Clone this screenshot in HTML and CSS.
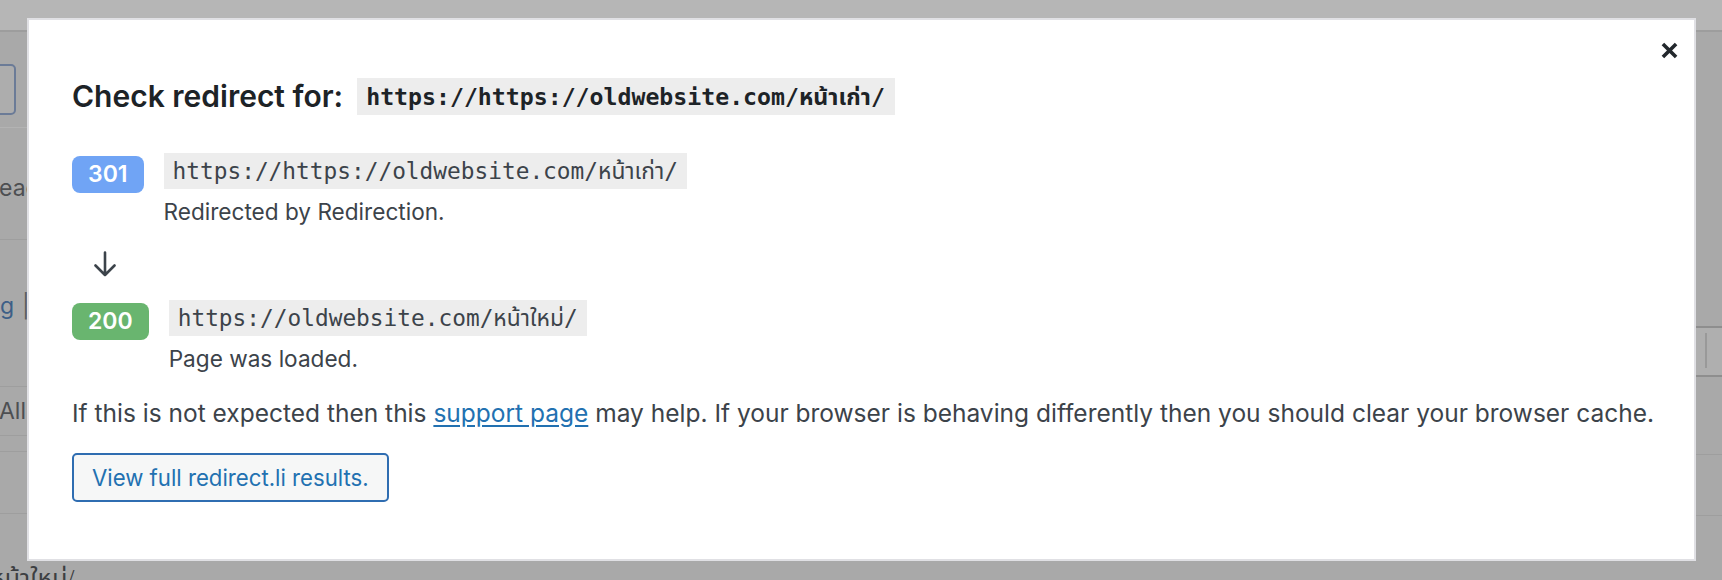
FILE: index.html
```html
<!DOCTYPE html>
<html lang="en">
<head>
<meta charset="utf-8">
<title>Check redirect</title>
<link rel="stylesheet" href="styles.css">
</head>
<body>
<div class="page">
  <div class="topbar"></div>
  <div class="columns">
    <div class="strip strip-left">
      <div class="seg seg-l1"><span class="bg-button"></span></div>
      <div class="seg seg-l2"><span class="bg-text">eac</span></div>
      <div class="seg seg-l3"><span class="bg-link">g</span><span class="bg-sep">|</span></div>
      <div class="seg seg-l4"><span class="bg-text">All</span></div>
      <div class="seg seg-l5"></div>
      <div class="seg seg-l6"></div>
      <div class="seg seg-l7"><span class="bg-thai">หน้าใหม่/</span></div>
    </div>
    <div class="strip strip-right">
      <div class="seg seg-r1"></div>
      <div class="seg seg-r2"><span class="bg-bar"></span></div>
      <div class="seg seg-r3"></div>
      <div class="seg seg-r4"></div>
    </div>
  </div>
</div>

<div class="modal">
  <button class="close" aria-label="Close">
    <svg width="17" height="17" viewBox="0 0 16 16"><path d="M3 0.6 L8 5.6 L13 0.6 L15.4 3 L10.4 8 L15.4 13 L13 15.4 L8 10.4 L3 15.4 L0.6 13 L5.6 8 L0.6 3 Z" fill="#23282d"/></svg>
  </button>
  <div class="title-row">
    <h2 class="title">Check redirect for:</h2>
    <code class="code code-bold">https://https://oldwebsite.com/หน้าเก่า/</code>
  </div>

  <div class="step">
    <span class="badge badge-blue">301</span>
    <div class="step-body">
      <code class="code">https://https://oldwebsite.com/หน้าเก่า/</code>
      <p class="step-desc">Redirected by Redirection.</p>
    </div>
  </div>

  <div class="arrow">
    <svg width="24" height="26" viewBox="0 0 24 26"><path d="M12 1.5 V24 M2.5 14.5 L12 24 L21.5 14.5" fill="none" stroke="#3c434a" stroke-width="2.6" stroke-linecap="round" stroke-linejoin="round"/></svg>
  </div>

  <div class="step step-second">
    <span class="badge badge-green">200</span>
    <div class="step-body">
      <code class="code">https://oldwebsite.com/หน้าใหม่/</code>
      <p class="step-desc">Page was loaded.</p>
    </div>
  </div>

  <p class="note">If this is not expected then this <a href="#" class="link">support page</a> may help. If your browser is behaving differently then you should clear your browser cache.</p>

  <button class="btn">View full redirect.li results.</button>
</div>
</body>
</html>
```

FILE: styles.css
```css
html, body {
  margin: 0;
  padding: 0;
}
body {
  width: 1722px;
  height: 580px;
  overflow: hidden;
  background: #a9a9a9;
  font-family: "Inter", "Noto Sans", "Noto Sans Thai", "Loma", "Garuda", sans-serif;
  position: relative;
}

/* underlying (dimmed) page */
.page {
  height: 580px;
  display: flex;
  flex-direction: column;
}
.topbar {
  height: 30px;
  background: #b6b6b6;
  border-bottom: 2px solid #9d9d9d;
  flex: none;
}
.columns {
  flex: 1;
  display: flex;
  justify-content: space-between;
}
.strip {
  display: flex;
  flex-direction: column;
}
.strip-left { width: 27px; }
.strip-right { width: 26px; }
.seg { flex: none; white-space: nowrap; }

.seg-l1 { height: 95px; border-bottom: 1px solid #b3b3b3; }
.bg-button {
  display: block;
  margin: 32px 0 0 -12px;
  width: 24px;
  height: 47px;
  border: 2px solid #6b7b97;
  border-radius: 5px;
  background: #adadad;
}
.seg-l2 { border-bottom: 1px solid #9e9e9e; display: flex; align-items: center; padding-top: 8px; box-sizing: border-box; height: 112px; }
.seg-l3 { border-bottom: 1px solid #9e9e9e; display: flex; align-items: center; padding-bottom: 14px; box-sizing: border-box; height: 147px; }
.seg-l4 { height: 48px; border-bottom: 1px solid #9e9e9e; display: flex; align-items: center; }
.seg-l5 { height: 15px; border-bottom: 1px solid #9e9e9e; }
.seg-l6 { height: 61px; border-bottom: 1px solid #9e9e9e; }
.seg-l7 { flex: 1; display: flex; align-items: flex-end; }

.bg-text {
  font-size: 23px;
  color: #4d4f52;
  margin-left: -1px;
}
.bg-link { font-size: 23px; color: #3d5f87; }
.bg-sep { font-size: 23px; color: #5a5d61; margin-left: 8px; }
.bg-thai {
  font-family: "Liberation Serif", "Noto Sans Thai", "Loma", serif;
  font-size: 25px;
  color: #3d3f42;
  line-height: 26px;
  margin-bottom: -12px;
  margin-left: -10px;
}

.seg-r1 { height: 294px; border-bottom: 2px solid #8e8e8e; }
.seg-r2 { height: 47px; border-bottom: 2px solid #8e8e8e; background: #afafaf; }
.bg-bar {
  display: block;
  margin: 5px 0 0 9px;
  width: 2px;
  height: 35px;
  background: #999;
}
.seg-r3 { height: 77px; border-bottom: 1px solid #9e9e9e; }
.seg-r4 { height: 60px; border-bottom: 1px solid #9e9e9e; }

/* modal */
.modal {
  position: absolute;
  top: 18px;
  left: 27px;
  width: 1669px;
  box-sizing: border-box;
  background: #fff;
  border: 2px solid #e0e0e4;
  padding: 58px 24px 57px 43px;
  color: #3c434a;
  font-size: 23.4px;
  line-height: 32.8px;
}
.close {
  position: absolute;
  top: 22px;
  right: 16px;
  width: 17px;
  height: 17px;
  padding: 0;
  border: 0;
  background: none;
  display: flex;
}

.title-row {
  display: flex;
  align-items: center;
  gap: 14px;
  height: 37px;
}
.title {
  margin: 0;
  font-size: 30px;
  font-weight: 600;
  color: #1d2327;
  line-height: 37px;
}

.code {
  display: inline-block;
  font-family: "DejaVu Sans Mono", "Noto Sans Thai", "Loma", "Garuda", monospace;
  font-size: 22.8px;
  line-height: 30px;
  padding: 3px 9px;
  background: rgba(0, 0, 0, 0.07);
  color: #3c434a;
  white-space: nowrap;
}
.code-bold {
  font-size: 23.2px;
  font-weight: bold;
  color: #1d2327;
  padding: 3.5px 10px 3.5px 9px;
}

.step {
  display: flex;
  align-items: flex-start;
  gap: 20px;
  margin-top: 38px;
}
.step-second { margin-top: 23px; }
.badge {
  flex: none;
  margin-top: 3px;
  height: 37px;
  line-height: 37px;
  padding: 0 16px;
  border-radius: 8px;
  color: #fff;
  font-weight: 600;
  font-size: 23px;
  text-align: center;
}
.badge-blue { background: #70a4f5; }
.badge-green { background: #69b56f; }
.step-body {
  display: flex;
  flex-direction: column;
  align-items: flex-start;
}
.step-desc {
  margin: 7px 0 0;
  font-size: 22.6px;
  line-height: 31px;
}

.arrow {
  margin: 24px 0 0 21px;
  height: 26px;
  display: flex;
}

.note {
  margin: 23px 0 0;
  font-size: 24.5px;
  line-height: 33px;
  white-space: nowrap;
}
.link {
  color: #2271b1;
  text-decoration: underline;
  text-underline-offset: 3px;
}

.btn {
  display: block;
  margin-top: 23px;
  height: 49px;
  padding: 0 18px;
  border: 2px solid #2f6db1;
  border-radius: 5px;
  background: #f6f7f7;
  color: #2271b1;
  font-family: inherit;
  font-size: 22.2px;
}
```
